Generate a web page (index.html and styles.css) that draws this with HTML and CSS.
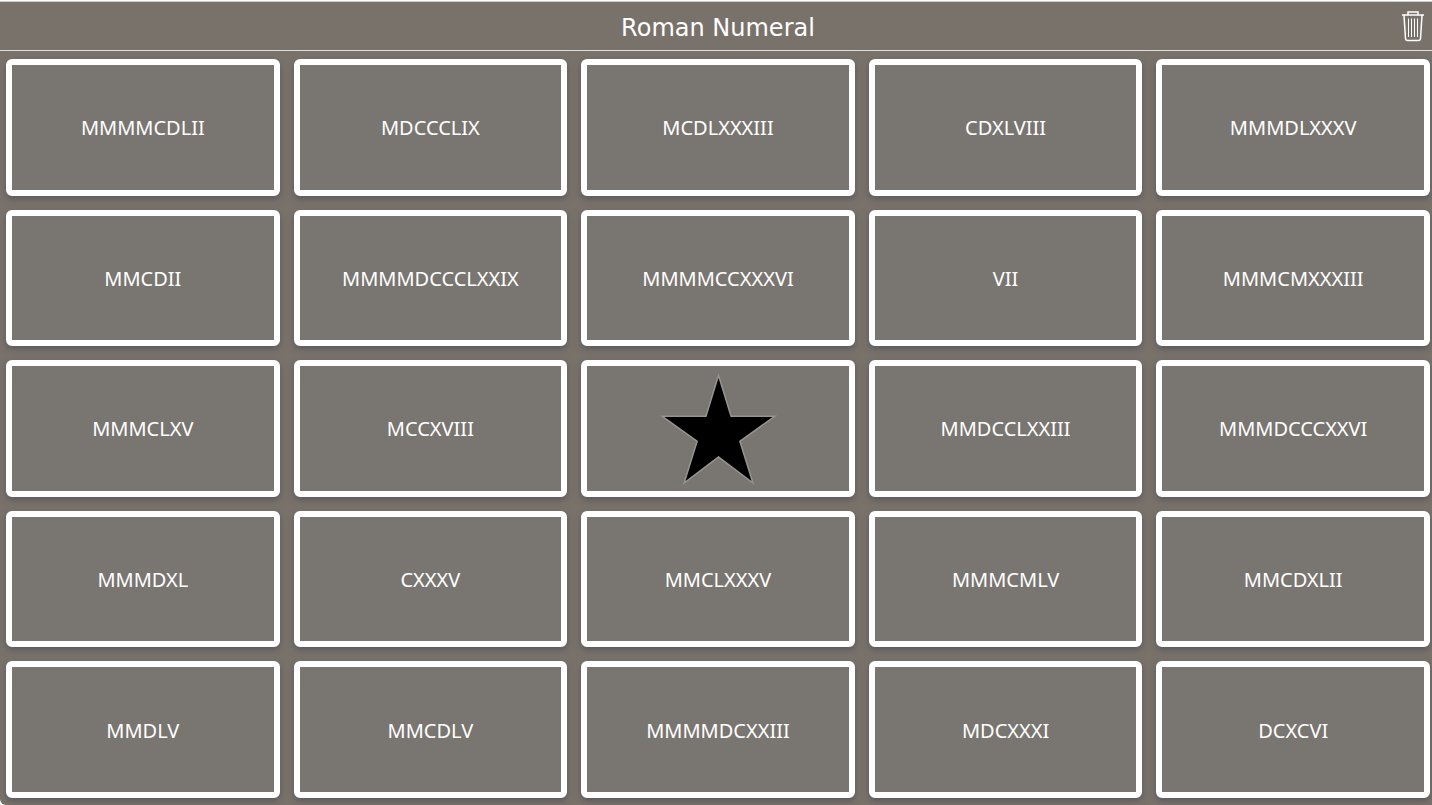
FILE: index.html
```html
<!DOCTYPE html>
<html lang="en">
<head>
<meta charset="utf-8">
<meta name="viewport" content="width=device-width, initial-scale=1">
<title>Roman Numeral</title>
<link rel="stylesheet" href="styles.css">
</head>
<body>
<div class="app">
  <header class="bar">
    <h1 class="title">Roman Numeral</h1>
    <button class="clear" type="button" aria-label="Clear board">
      <svg class="trash" viewBox="0 0 26 32" aria-hidden="true">
        <path d="M2 5H24M8 4.500V2H18V4.500M4 5.500L5.500 28.500Q5.700 30.500 7.500 30.500H18.500Q20.300 30.500 20.500 28.500L22 5.500"/>
        <path class="ribs" d="M8.500 8.500V27M11.500 8.500V27M14.500 8.500V27M17.500 8.500V27"/>
      </svg>
    </button>
  </header>
  <main class="board">
    <button class="cell" type="button">MMMMCDLII</button>
    <button class="cell" type="button">MDCCCLIX</button>
    <button class="cell" type="button">MCDLXXXIII</button>
    <button class="cell" type="button">CDXLVIII</button>
    <button class="cell" type="button">MMMDLXXXV</button>
    <button class="cell" type="button">MMCDII</button>
    <button class="cell" type="button">MMMMDCCCLXXIX</button>
    <button class="cell" type="button">MMMMCCXXXVI</button>
    <button class="cell" type="button">VII</button>
    <button class="cell" type="button">MMMCMXXXIII</button>
    <button class="cell" type="button">MMMCLXV</button>
    <button class="cell" type="button">MCCXVIII</button>
    <button class="cell" type="button" aria-label="Free space">
      <svg class="star" viewBox="0 0 120 120" aria-hidden="true">
        <path d="M60.500 9L72.500 48H114.500L81 72L93.500 112L60.500 87L27.500 112L40 72L6.500 48H48.500Z"/>
      </svg>
    </button>
    <button class="cell" type="button">MMDCCLXXIII</button>
    <button class="cell" type="button">MMMDCCCXXVI</button>
    <button class="cell" type="button">MMMDXL</button>
    <button class="cell" type="button">CXXXV</button>
    <button class="cell" type="button">MMCLXXXV</button>
    <button class="cell" type="button">MMMCMLV</button>
    <button class="cell" type="button">MMCDXLII</button>
    <button class="cell" type="button">MMDLV</button>
    <button class="cell" type="button">MMCDLV</button>
    <button class="cell" type="button">MMMMDCXXIII</button>
    <button class="cell" type="button">MDCXXXI</button>
    <button class="cell" type="button">DCXCVI</button>
  </main>
</div>
</body>
</html>
```
FILE: styles.css
```css
* {
  box-sizing: border-box;
}

body {
  margin: 0;
  background: #fff;
  color: #fff;
}

.app {
  display: flex;
  flex-direction: column;
  min-height: 100vh;
  border-top: 1px solid #fff;
  border-radius: 0 0 0 6px;
  background: #79726b;
}

.bar {
  display: grid;
  grid-template-columns: 1fr auto 1fr;
  align-items: center;
  height: 50px;
  padding: 0 6px 0 10px;
  border-top: 1px solid #ccc;
  border-bottom: 1px solid #ddd;
}

.title {
  grid-column: 2;
  margin: 0;
  padding-top: 4px;
  font: 400 24px/32px Verdana, "DejaVu Sans", sans-serif;
}

.clear {
  justify-self: end;
  display: flex;
  padding: 0;
  border: 0;
  background: none;
  cursor: pointer;
}

.trash {
  width: 26px;
  height: 32px;
  fill: none;
  stroke: #fff;
  stroke-width: 1.5;
}

.ribs {
  stroke-width: 1;
}

.board {
  flex: 1;
  display: grid;
  grid-template-columns: repeat(5, minmax(0, 1fr));
  grid-auto-rows: minmax(0, 1fr);
  gap: 14px;
  padding: 8px 2px 7px 6px;
}

.cell {
  display: flex;
  align-items: center;
  justify-content: center;
  min-height: 80px;
  padding: 2px 0 0;
  border: 6px solid #fff;
  border-radius: 6px;
  background: #797570;
  box-shadow: 0 3px 6px rgba(64, 64, 80, 0.5);
  color: #fff;
  font: 400 20px/28px "Noto Sans", sans-serif;
  cursor: pointer;
}

.star {
  width: 120px;
  height: 120px;
  stroke: #969491;
  stroke-width: 3;
  stroke-miterlimit: 8;
  paint-order: stroke;
}
```
